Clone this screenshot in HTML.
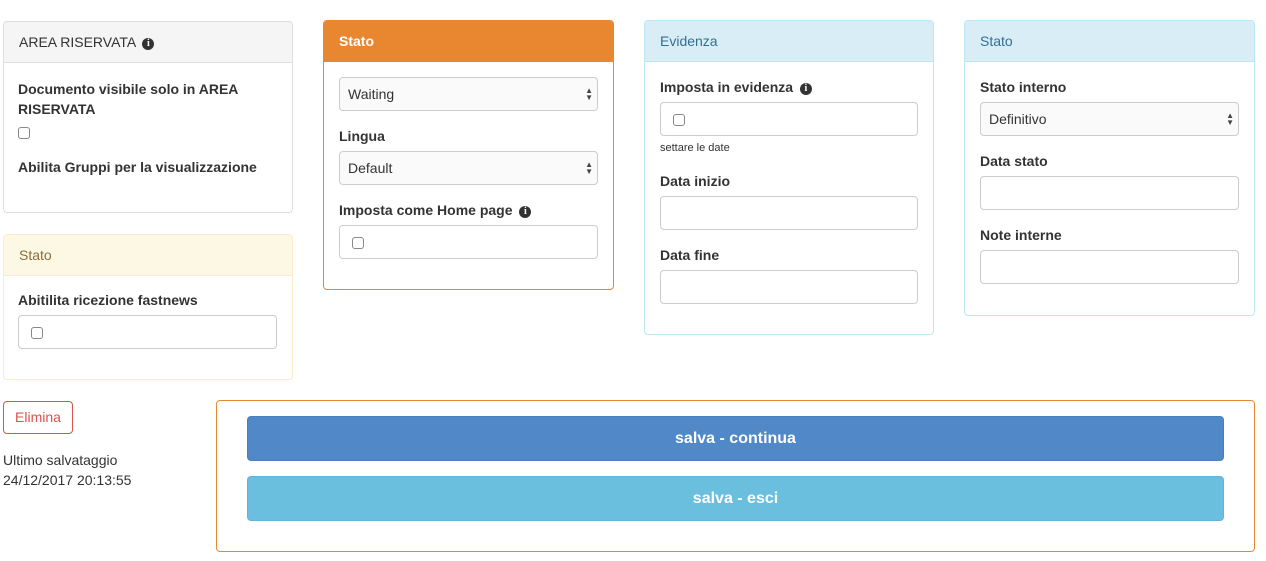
<!DOCTYPE html>
<html><head><style>
*{box-sizing:border-box}
body{margin:0;width:1266px;height:561px;background:#fff;font-family:"Liberation Sans",sans-serif;font-size:14px;color:#333;position:relative;overflow:hidden}
.p{position:absolute;border:1px solid #ddd;border-radius:4px;background:#fff}
.h{height:41px;line-height:40px;padding:0 15px;border-bottom:1px solid #ddd;border-radius:3px 3px 0 0;background:#f5f5f5}
.a{position:absolute}
.lb{position:absolute;font-weight:bold;font-size:14px}
.in{position:absolute;border:1px solid #ccc;border-radius:4px;height:34px;background:#fff}
.cb{position:absolute;width:12px;height:12px;border:1px solid #888;border-radius:3px;background:#fff}
.sel{padding:0 8px;line-height:32px;background:#fafafa}
.arr{position:absolute;right:4px;top:9px;font-size:8px;line-height:7px;color:#444}
.i{display:inline-block;width:12px;height:12px;border-radius:50%;background:#333;color:#fff;font-size:10px;font-weight:bold;text-align:center;line-height:12px;font-family:"Liberation Serif",serif;vertical-align:1px;margin-left:3px}
</style></head><body>

<div class="p" style="left:3px;top:21px;width:290px;height:192px">
 <div class="h">AREA RISERVATA <span class="i">i</span></div>
</div>
<div class="lb" style="left:18px;top:79px;line-height:20px">Documento visibile solo in AREA<br>RISERVATA</div>
<div class="cb" style="left:18px;top:127px"></div>
<div class="lb" style="left:18px;top:159px">Abilita Gruppi per la visualizzazione</div>

<div class="p" style="left:3px;top:234px;width:290px;height:146px;border-color:#faebcc">
 <div class="h" style="background:#fcf8e3;border-color:#faebcc;color:#8a6d3b">Stato</div>
</div>
<div class="lb" style="left:18px;top:292px">Abitilita ricezione fastnews</div>
<div class="in" style="left:18px;top:315px;width:259px"></div>
<div class="cb" style="left:31px;top:327px"></div>

<div class="p" style="left:323px;top:20px;width:291px;height:270px;border-color:#e8872f">
 <div class="h" style="background:#e8872f;border-color:#e8872f;color:#fff;font-weight:bold;padding-left:15px">Stato</div>
</div>
<div class="in sel" style="left:339px;top:77px;width:259px">Waiting<div class="arr">▲<br>▼</div></div>
<div class="lb" style="left:339px;top:128px">Lingua</div>
<div class="in sel" style="left:339px;top:151px;width:259px">Default<div class="arr">▲<br>▼</div></div>
<div class="lb" style="left:339px;top:202px">Imposta come Home page <span class="i">i</span></div>
<div class="in" style="left:339px;top:225px;width:259px"></div>
<div class="cb" style="left:352px;top:237px"></div>

<div class="p" style="left:644px;top:20px;width:290px;height:315px;border-color:#bce8f1">
 <div class="h" style="background:#d9edf7;border-color:#bce8f1;color:#31708f">Evidenza</div>
</div>
<div class="lb" style="left:660px;top:79px">Imposta in evidenza <span class="i">i</span></div>
<div class="in" style="left:660px;top:102px;width:258px"></div>
<div class="cb" style="left:673px;top:114px"></div>
<div class="a" style="left:660px;top:142px;font-size:11px">settare le date</div>
<div class="lb" style="left:660px;top:173px">Data inizio</div>
<div class="in" style="left:660px;top:196px;width:258px"></div>
<div class="lb" style="left:660px;top:247px">Data fine</div>
<div class="in" style="left:660px;top:270px;width:258px"></div>

<div class="p" style="left:964px;top:20px;width:291px;height:296px;border-color:#bce8f1">
 <div class="h" style="background:#d9edf7;border-color:#bce8f1;color:#31708f">Stato</div>
</div>
<div class="lb" style="left:980px;top:79px">Stato interno</div>
<div class="in sel" style="left:980px;top:102px;width:259px">Definitivo<div class="arr">▲<br>▼</div></div>
<div class="lb" style="left:980px;top:153px">Data stato</div>
<div class="in" style="left:980px;top:176px;width:259px"></div>
<div class="lb" style="left:980px;top:227px">Note interne</div>
<div class="in" style="left:980px;top:250px;width:259px"></div>

<div class="a" style="left:3px;top:401px;width:70px;height:33px;border:1px solid #d9534f;border-radius:4px;color:#d9534f;text-align:center;line-height:31px">Elimina</div>
<div class="a" style="left:3px;top:450px;line-height:20px">Ultimo salvataggio<br>24/12/2017 20:13:55</div>

<div class="a" style="left:216px;top:400px;width:1039px;height:152px;border:1px solid #e8872f;border-radius:4px"></div>
<div class="a" style="left:247px;top:416px;width:977px;height:45px;background:#5088c8;border:1px solid #4a7fbd;border-radius:4px;color:#fff;font-size:16px;font-weight:bold;text-align:center;line-height:43px">salva - continua</div>
<div class="a" style="left:247px;top:476px;width:977px;height:45px;background:#6abfde;border:1px solid #5fb6d6;border-radius:4px;color:#fff;font-size:16px;font-weight:bold;text-align:center;line-height:43px">salva - esci</div>
</body></html>
